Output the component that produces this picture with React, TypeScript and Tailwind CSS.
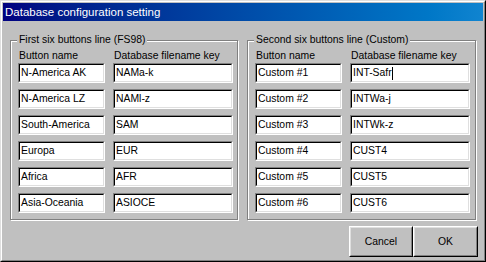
import React from "react";

const font = { fontFamily: '"Liberation Sans", Arial, sans-serif' };

function Field({ value, width, caret }: { value: string; width: string; caret?: boolean }) {
  return (
    <div
      className={`${width} h-[20px] border-t border-l border-t-[#808080] border-l-[#808080] border-b border-r border-b-white border-r-white`}
    >
      <div className="h-full border-t border-l border-t-black border-l-black border-b border-r border-b-[#dfdfdf] border-r-[#dfdfdf] bg-white flex items-center pl-[1px] text-[10.4px] leading-[12px] text-black whitespace-nowrap">
        <span>{value}</span>
        {caret && <span className="w-[1px] h-[13px] bg-black" />}
      </div>
    </div>
  );
}

function Group({
  title,
  width,
  rows,
}: {
  title: string;
  width: string;
  rows: [string, string, boolean?][];
}) {
  return (
    <div
      className={`relative ${width} h-[180px] border border-[#808080] shadow-[1px_1px_0_white,inset_1px_1px_0_white]`}
    >
      <div className="absolute left-[6px] top-[-8px] px-[2px] bg-[#c0c0c0] text-[10.4px] leading-[14px] whitespace-nowrap">
        {title}
      </div>
      <div className="pl-[7px] pt-[8px] flex flex-col">
        <div className="flex gap-[8px] h-[14px] text-[10.4px] leading-[14px] whitespace-nowrap">
          <div className="w-[87px] pl-[1px]">Button name</div>
          <div className="w-[120px] pl-[1px]">Database filename key</div>
        </div>
        <div className="flex flex-col gap-[6px] mt-[0px]">
          {rows.map(([a, b, c], i) => (
            <div key={i} className="flex gap-[8px]">
              <Field value={a} width="w-[87px]" />
              <Field value={b} width="w-[120px]" caret={c} />
            </div>
          ))}
        </div>
      </div>
    </div>
  );
}

function Btn({ label, width }: { label: string; width: string }) {
  return (
    <div
      className={`${width} h-[31px] border-t border-l border-t-white border-l-white border-b border-r border-b-black border-r-black`}
    >
      <div className="h-full border-t border-l border-t-[#dfdfdf] border-l-[#dfdfdf] border-b border-r border-b-[#808080] border-r-[#808080] flex items-center justify-center text-[10.4px] leading-[12px]">
        {label}
      </div>
    </div>
  );
}

export default function App() {
  return (
    <div
      style={font}
      className="w-[486px] h-[262px] bg-[#c0c0c0] text-black border-t border-l border-t-[#dfdfdf] border-l-[#dfdfdf] border-b border-r border-b-black border-r-black"
    >
      <div className="h-full border-t border-l border-t-white border-l-white border-b border-r border-b-[#808080] border-r-[#808080] p-[1px] flex flex-col">
        <div className="h-[18px] bg-gradient-to-r from-[#000080] to-[#1084d0] text-white text-[11.5px] leading-[18px] pl-[2px] whitespace-nowrap">
          Database configuration setting
        </div>
        <div className="flex pl-[7px] mt-[19px] gap-[9px]">
          <Group
            title="First six buttons line (FS98)"
            width="w-[228px]"
            rows={[
              ["N-America AK", "NAMa-k"],
              ["N-America LZ", "NAMl-z"],
              ["South-America", "SAM"],
              ["Europa", "EUR"],
              ["Africa", "AFR"],
              ["Asia-Oceania", "ASIOCE"],
            ]}
          />
          <Group
            title="Second six buttons line (Custom)"
            width="w-[229px]"
            rows={[
              ["Custom #1", "INT-Safr", true],
              ["Custom #2", "INTWa-j"],
              ["Custom #3", "INTWk-z"],
              ["Custom #4", "CUST4"],
              ["Custom #5", "CUST5"],
              ["Custom #6", "CUST6"],
            ]}
          />
        </div>
        <div className="flex justify-end mt-[6px] pr-[5px]">
          <Btn label="Cancel" width="w-[64px]" />
          <Btn label="OK" width="w-[65px]" />
        </div>
      </div>
    </div>
  );
}
